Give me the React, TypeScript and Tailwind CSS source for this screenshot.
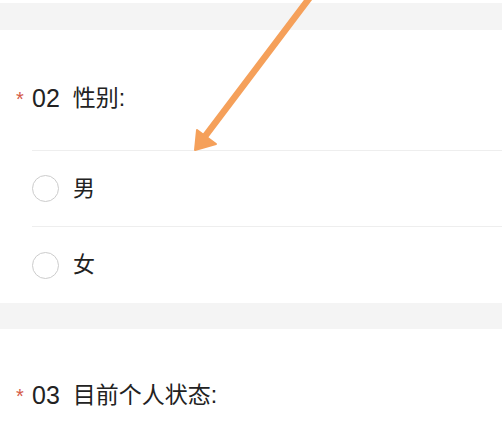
const font = { fontFamily: '"Liberation Sans", "Noto Sans CJK SC", sans-serif' };

function Title({ no, text }: { no: string; text: string }) {
  return (
    <div className="flex items-center pl-4 pt-[54px] pb-[39px] h-[121px]">
      <span className="w-4 text-[20px] leading-[28px] text-[#d45a48] mt-[2px]">*</span>
      <span className="text-[25px] leading-[28px] text-[#222222]">{no}</span>
      <span className="ml-[13px] text-[23px] leading-[28px] text-[#222222]">{text}</span>
    </div>
  );
}

function Option({ label, last }: { label: string; last?: boolean }) {
  return (
    <div className={"flex items-center h-[76px] ml-8 " + (last ? "" : "border-b border-[#eeeeee]")}>
      <span className="w-[27px] h-[27px] rounded-full border-[1.5px] border-[#cccccc] bg-white" />
      <span className="ml-[14px] text-[22px] leading-[28px] text-[#222222]">{label}</span>
    </div>
  );
}

export default function App() {
  return (
    <div className="relative w-[502px] h-[424px] overflow-hidden bg-white" style={font}>
      <div className="h-[3px]" />
      <div className="h-[27px] bg-[#f4f4f4]" />

      {/* 02 */}
      <div className="relative">
        <Title no="02" text="性别:" />
        <div className="border-b border-[#eeeeee] ml-8 -mt-px" />
      </div>
      <Option label="男" />
      <Option label="女" last />

      <div className="h-[26px] bg-[#f4f4f4]" />

      {/* 03 */}
      <div className="-mt-[2px]">
        <Title no="03" text="目前个人状态:" />
      </div>

      {/* annotation arrow */}
      <svg className="absolute left-0 top-0 pointer-events-none" width="502" height="424" viewBox="0 0 502 424">
        <line x1="311" y1="-4" x2="203" y2="139" stroke="#f5a05a" strokeWidth="6.5" strokeLinecap="round" />
        <polygon points="195,150 197,130 216,144" fill="#f5a05a" stroke="#f5a05a" strokeWidth="2" strokeLinejoin="round" />
      </svg>
    </div>
  );
}
